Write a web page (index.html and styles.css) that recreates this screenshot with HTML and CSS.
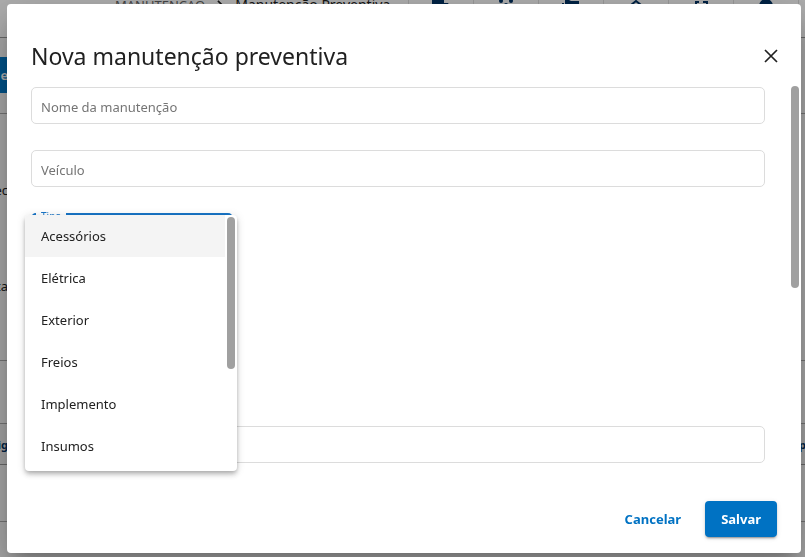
FILE: index.html
```html
<!DOCTYPE html>
<html lang="pt-BR">
<head>
<meta charset="utf-8">
<meta name="viewport" content="width=device-width, initial-scale=1">
<title>Manutenção Preventiva</title>
<link rel="stylesheet" href="styles.css">
</head>
<body>
<div class="page">
  <header class="topbar">
    <nav class="crumbs">
      <span class="crumb-parent">MANUTENÇÃO</span>
      <svg class="crumb-arrow" viewBox="0 0 8 12"><path d="M1.500 1l5 5-5 5" fill="none" stroke="currentColor" stroke-width="2"/></svg>
      <span class="crumb-current">Manutenção Preventiva</span>
    </nav>
    <div class="tools">
      <span class="tool"><svg viewBox="0 0 20 20"><path d="M1 0h12v3h4l3 5v6h-2a3 3 0 0 1-6 0H8a3 3 0 0 1-6 0H1z"/></svg></span>
      <span class="tool"><svg viewBox="0 0 20 20"><circle cx="5" cy="1" r="2"/><circle cx="15" cy="1" r="2"/><circle cx="10" cy="5" r="2"/><path d="M1 11q0-7 4-7t4 7zM11 11q0-7 4-7t4 7z"/></svg></span>
      <span class="tool"><svg viewBox="0 0 20 20"><path d="M4 0h4l2 1h8v9H4zM1 3h2v9h13v2H1z"/></svg></span>
      <span class="tool"><svg viewBox="0 0 20 20"><path d="M5 5l5-4 5 4v9H5z" fill="none" stroke="currentColor" stroke-width="2"/></svg></span>
      <span class="tool"><svg viewBox="0 0 20 20"><path d="M5 6V2h3M12 2h4v4M5 10v4h3M12 14h4v-4" fill="none" stroke="currentColor" stroke-width="2"/></svg></span>
      <span class="tool"><svg viewBox="0 0 20 20"><circle cx="10" cy="6" r="7"/></svg></span>
    </div>
  </header>
  <main class="content">
    <div class="actions"><span class="edge action">e</span></div>
    <div class="filters"><span class="edge">ec</span><span class="edge">ta</span></div>
    <div class="gap-row"></div>
    <div class="table-head"><span class="edge">ig</span><span class="edge-end">p</span></div>
    <div class="table-row"></div>
  </main>
</div>
<div class="backdrop">
  <section class="dialog" role="dialog" aria-modal="true" aria-labelledby="dialog-title">
    <div class="dialog-head">
      <h1 id="dialog-title">Nova manutenção preventiva</h1>
      <button class="close" type="button" aria-label="Fechar"><svg viewBox="0 0 14 14"><path d="M1 1l12 12M13 1L1 13" fill="none" stroke="currentColor" stroke-width="1.700"/></svg></button>
    </div>
    <form class="fields" id="maintenance">
      <input class="field" type="text" placeholder="Nome da manutenção" aria-label="Nome da manutenção">
      <input class="field" type="text" placeholder="Veículo" aria-label="Veículo">
      <div class="type">
        <fieldset class="type-box">
          <legend><label for="type">Tipo</label></legend>
          <select id="type"><option></option></select>
        </fieldset>
        <div class="menu">
          <ul role="listbox" aria-label="Tipo">
            <li role="option" aria-selected="true">Acessórios</li>
            <li role="option">Elétrica</li>
            <li role="option">Exterior</li>
            <li role="option">Freios</li>
            <li role="option">Implemento</li>
            <li role="option">Insumos</li>
          </ul>
          <div class="menu-track"><div class="thumb menu-thumb"></div></div>
        </div>
      </div>
      <input class="field" type="text" aria-label="Observação">
      <div class="thumb form-thumb"></div>
    </form>
    <div class="dialog-actions">
      <button class="btn" type="button">Cancelar</button>
      <button class="btn btn-main" type="submit" form="maintenance">Salvar</button>
    </div>
  </section>
</div>
</body>
</html>
```
FILE: styles.css
```css
* { box-sizing: border-box; }
html, body { height: 100%; }
body {
  margin: 0;
  overflow: hidden;
  font-family: "Noto Sans", "Open Sans", sans-serif;
  font-size: 13px;
  color: #212121;
}
button, input, select { font: inherit; color: inherit; }

/* Page behind the dialog */
.page { height: 100%; overflow: hidden; display: flex; flex-direction: column; background: #f7f7f7; }
.topbar {
  flex: none;
  height: 38px;
  display: flex;
  align-items: flex-start;
  justify-content: space-between;
  padding-left: 115px;
  background: #fff;
  border-bottom: 1px solid #999;
}
.crumbs { display: flex; align-items: center; gap: 11px; line-height: 10px; white-space: nowrap; }
.crumb-parent { color: #666; }
.crumb-current { font-size: 14px; }
.crumb-arrow { width: 8px; height: 10px; }
.tools { display: flex; height: 100%; padding-right: 6px; color: #003366; }
.tool { width: 65px; padding-left: 22px; border-left: 1px solid #e0e0e0; }
.tool svg { display: block; width: 20px; height: 20px; fill: currentColor; }
.tool:last-child { border-right: 1px solid #e0e0e0; width: 66px; }
.content { flex: 1; display: flex; flex-direction: column; }
.edge { width: 8px; display: flex; justify-content: flex-end; overflow: hidden; }
.edge-end { width: 6px; overflow: hidden; }
.actions { height: 76px; padding-top: 19px; border-bottom: 1px solid #aaa; }
.action { height: 36px; align-items: center; background: #0078c8; color: #fff; font-weight: 600; }
.filters { height: 247px; padding-top: 67px; display: flex; flex-direction: column; gap: 78px; border-bottom: 1px solid #aaa; }
.gap-row { height: 63px; border-bottom: 1px solid #aaa; }
.table-head {
  height: 41px;
  display: flex;
  align-items: center;
  justify-content: space-between;
  background: #f0f0f0;
  border-bottom: 1px solid #999;
  color: #003366;
  font-size: 11px;
  font-weight: 700;
}
.table-row { height: 57px; border-bottom: 1px solid #aaa; }

/* Dialog */
.backdrop {
  position: fixed;
  inset: 0;
  display: flex;
  padding: 4px 4px 4px 7px;
  background: rgba(0, 0, 0, 0.32);
}
.dialog {
  flex: 1;
  display: flex;
  flex-direction: column;
  background: #fff;
  border-radius: 4px;
  box-shadow: 0 11px 15px -7px rgba(0, 0, 0, 0.2), 0 24px 38px 3px rgba(0, 0, 0, 0.14), 0 9px 46px 8px rgba(0, 0, 0, 0.12);
}
.dialog-head {
  height: 83px;
  padding: 20px 18px 0 24px;
  display: flex;
  align-items: flex-start;
  justify-content: space-between;
}
h1 { margin: 0; font-size: 23px; line-height: 64px; font-weight: 400; }
.close { width: 24px; height: 64px; padding: 0 5px; border: 0; background: none; }
.close svg { display: block; width: 14px; height: 14px; }
.fields {
  position: relative;
  flex: 1;
  display: flex;
  flex-direction: column;
  gap: 26px;
  padding: 0 36px 0 24px;
}
.field {
  width: 100%;
  height: 37px;
  padding: 3px 9px 0;
  border: 1px solid #dcdcdc;
  border-radius: 5px;
  background: #fff;
}
.field::placeholder { color: #757575; opacity: 1; }
.type { position: relative; width: 202px; height: 187px; }
.type-box {
  height: 37px;
  margin: 0;
  padding: 0 3px;
  border: 2px solid #1976c8;
  border-radius: 5px;
}
legend { height: 2px; padding: 0 5px; font-size: 10px; line-height: 6px; color: #1976c8; }
.type-box select { display: block; width: 100%; height: 30px; border: 0; background: none; appearance: none; }
.menu {
  position: absolute;
  z-index: 1;
  top: 2px;
  left: -6px;
  width: 212px;
  height: 256px;
  display: flex;
  overflow: hidden;
  background: #fff;
  border-radius: 4px;
  box-shadow: 0 2px 4px -1px rgba(0, 0, 0, 0.2), 0 4px 5px 0 rgba(0, 0, 0, 0.14), 0 1px 10px 0 rgba(0, 0, 0, 0.12);
}
.menu ul { flex: 1; margin: 0; padding: 0; list-style: none; }
.menu li { height: 42px; padding: 0 16px; line-height: 42px; }
.menu li[aria-selected="true"] { background: #f4f4f4; }
.menu-track { width: 12px; padding: 2px; }
.thumb { width: 8px; border-radius: 4px; background: #a0a0a0; }
.menu-thumb { height: 152px; }
.form-thumb { position: absolute; top: -1px; right: 2px; height: 202px; }
.dialog-actions { display: flex; justify-content: flex-end; gap: 8px; padding: 16px 24px; }
.btn {
  height: 36px;
  padding: 0 16px;
  border: 0;
  border-radius: 4px;
  background: none;
  color: #0072c3;
  font-weight: 700;
}
.btn-main {
  background: #0072c3;
  color: #fff;
  box-shadow: 0 3px 1px -2px rgba(0, 0, 0, 0.2), 0 2px 2px 0 rgba(0, 0, 0, 0.14), 0 1px 5px 0 rgba(0, 0, 0, 0.12);
}
```
